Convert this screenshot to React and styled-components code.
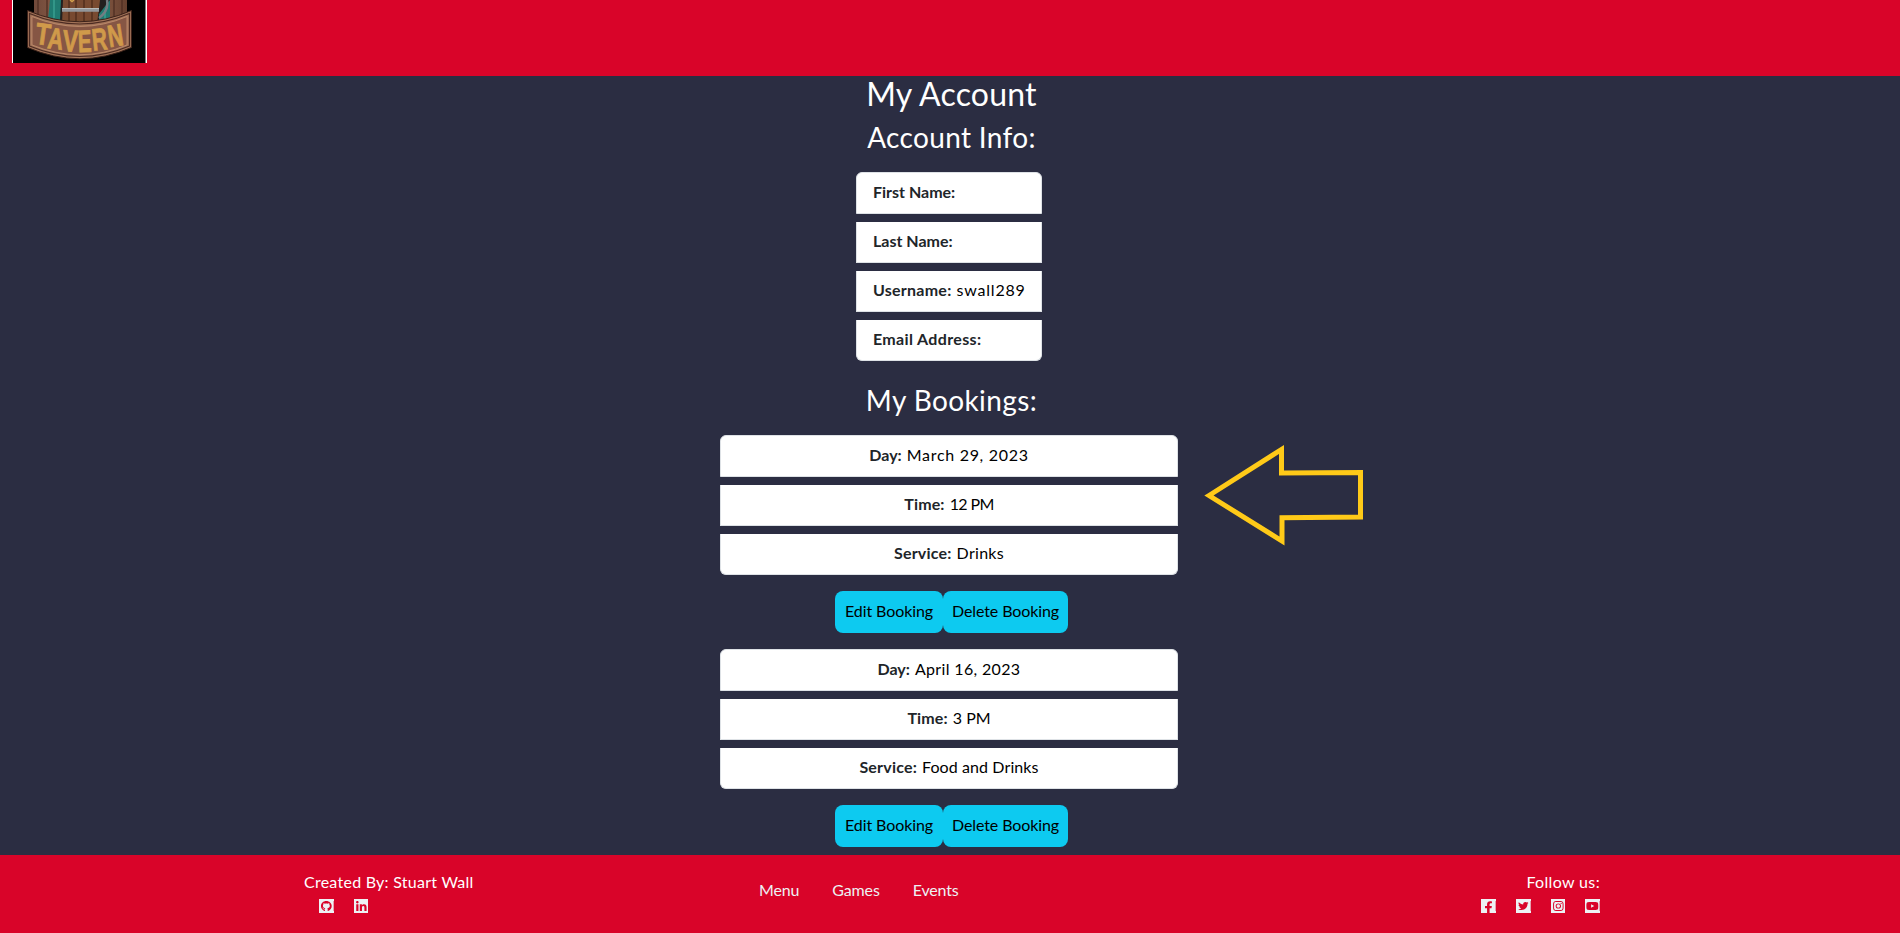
import React from 'react';
import styled, { createGlobalStyle } from 'styled-components';
import {
  FaGithubSquare,
  FaLinkedin,
  FaFacebookSquare,
  FaTwitterSquare,
  FaInstagramSquare,
  FaYoutubeSquare,
} from 'react-icons/fa';

const GlobalStyle = createGlobalStyle`
  * { box-sizing: border-box; }
  body {
    margin: 0;
    background: #2b2d42;
    color: #212529;
    font: 400 16px/1.5 Lato, sans-serif;
    overflow: hidden;
  }
`;

const Page = styled.div`
  height: 933px;
  display: flex;
  flex-direction: column;
`;

const Header = styled.header`
  height: 76px;
  flex: none;
  padding-left: 12px;
  background: #d90429;
`;

const Logo = styled.svg`
  display: block;
`;

const Main = styled.main`
  flex: 1;
  min-height: 0;
  display: flex;
  flex-direction: column;
  align-items: center;
  padding-right: 2px;
  position: relative;
`;

const Title = styled.h1`
  margin: 0 0 8px 5px;
  padding-bottom: 2px;
  height: 38.4px;
  color: #fff;
  font-size: 32px;
  font-weight: 400;
  line-height: 36.4px;
  letter-spacing: ${(p) => p.$track || 0}px;
  white-space: nowrap;
`;

const SubTitle = styled(Title).attrs({ as: 'h2' })`
  margin-bottom: 16px;
  height: 33.6px;
  font-size: 28px;
  line-height: 31.6px;
`;

const List = styled.ul`
  list-style: none;
  margin: 0;
  padding: 0;
  width: ${(p) => p.$width}px;
  display: flex;
  flex-direction: column;
  gap: 8px;
  margin-bottom: ${(p) => p.$after}px;
`;

const Item = styled.li`
  display: flex;
  justify-content: ${(p) => (p.$centered ? 'center' : 'flex-start')};
  gap: 5px;
  height: 41px;
  padding: 7px 16px 8px;
  background: #fff;
  border: 1px solid #dee2e6;
  border-top: 0;
  white-space: nowrap;

  &:first-child {
    height: 42px;
    border-top: 1px solid #dee2e6;
    border-radius: 6px 6px 0 0;
  }
  &:last-child {
    border-radius: 0 0 6px 6px;
  }
`;

const Label = styled.strong`
  font-weight: 700;
  letter-spacing: ${(p) => p.$track || 0}px;
`;

const Value = styled.span`
  color: #000;
  letter-spacing: ${(p) => p.$track || 0}px;
`;

const Actions = styled.div`
  display: flex;
  margin: 0 0 16px 5px;
`;

const Button = styled.button`
  width: ${(p) => p.$width}px;
  height: 42px;
  padding: 0 0 2px;
  border: 0;
  border-radius: 8px;
  background: #0dcaf0;
  color: #000;
  font: inherit;
  letter-spacing: -0.1px;
  white-space: nowrap;
`;

const Arrow = styled.svg`
  position: absolute;
  left: 1190px;
  top: 354px;
`;

const Footer = styled.footer`
  height: 78px;
  flex: none;
  display: grid;
  grid-template-columns: 455px 1fr auto;
  padding: 15px 300px 0 304px;
  background: #d90429;
  color: #fff;
`;

const Credit = styled.div`
  letter-spacing: ${(p) => p.$track}px;
  text-align: ${(p) => p.$align || 'left'};
  line-height: 24px;
`;

const Icons = styled.div`
  display: flex;
  gap: 20px;
  padding-left: ${(p) => p.$indent || 0}px;
  margin-top: 4px;
  color: #edf2f4;

  svg {
    --corner: linear-gradient(currentColor, currentColor);
    width: 14.67px;
    height: 16px;
    background:
      var(--corner) left 0 top 1px / 2px 2px no-repeat,
      var(--corner) right 0 top 1px / 2px 2px no-repeat,
      var(--corner) left 0 bottom 1px / 2px 2px no-repeat,
      var(--corner) right 0 bottom 1px / 2px 2px no-repeat;
  }
`;

const FooterNav = styled.nav`
  display: flex;
  gap: 33px;
  padding-top: 8px;
  color: #edf2f4;
  letter-spacing: -0.15px;
`;

function TavernLogo() {
  return (
    <Logo width="135" height="63" viewBox="0 0 135 63">
      <defs>
        <linearGradient id="wood" x1="0" x2="1">
          <stop offset="0" stopColor="#70493a" />
          <stop offset=".5" stopColor="#9a6950" />
          <stop offset="1" stopColor="#65402f" />
        </linearGradient>
      </defs>
      <rect width="135" height="63" fill="#fff" />
      <rect x="1" width="132.5" height="63" fill="#000" />
      <path d="M22 0h17v20H22zM98 0h17v20H98z" fill="url(#wood)" />
      <path d="M26 0v18M35 0v18M102 0v18M110 0v18" stroke="#4b2b20" strokeWidth="1.2" />
      <path d="M39 0h59v24H39z" fill="#23201f" />
      <path d="M38 0h11l-1 20H36zM87 14l11-14v21H87z" fill="#207b71" />
      <path d="M42 0v18M93 10v10" stroke="#39a090" strokeWidth="1.5" />
      <path d="M51 0h37l-3 24H50z" fill="#784a30" />
      <path d="M57 0v23M64 0v24M72 0v24M80 0v24" stroke="#492918" strokeWidth="1.2" />
      <path d="M50 10h37" stroke="#92979a" strokeWidth="3.6" />
      <path d="M50 8.5h37" stroke="#c3c6c8" strokeWidth=".8" />
      <path d="M58 0l2 1.5 2-1.5" stroke="#d4a24d" strokeWidth="1.5" fill="none" />
      <path d="M95 0q2 11-8 18" stroke="#737d82" strokeWidth="2.5" fill="none" />
      <path d="M15.5 10.5Q68 33 119.5 10.5V47.5Q68 70 15.5 47.5Z" fill="#a27358" stroke="#3b2119" strokeWidth="1" />
      <path d="M17.5 13.5Q68 34.5 117.5 13.5V46Q68 67 17.5 46Z" fill="none" stroke="#4c2b22" strokeWidth="1.2" />
      <path d="M20 16.5Q68 36.5 115 16.5V45Q68 64.5 20 45Z" fill="#865644" stroke="#c39070" strokeWidth=".8" />
      <g
        fill="#d09a4a"
        stroke="#d09a4a"
        strokeWidth=".8"
        fontFamily="Liberation Sans, sans-serif"
        fontWeight="700"
        fontSize="31"
        textAnchor="middle"
      >
        <text transform="translate(29.5 44.5) rotate(8) scale(.78 .98)">T</text>
        <text transform="translate(42.5 49) rotate(7) scale(.7 .96)">A</text>
        <text transform="translate(58 51.5) rotate(3) scale(.74 .98)">V</text>
        <text transform="translate(73 52) rotate(-2) scale(.66 1)">E</text>
        <text transform="translate(88.5 50) rotate(-6) scale(.68 1)">R</text>
        <text transform="translate(105 46) rotate(-9) scale(.68 1)">N</text>
      </g>
    </Logo>
  );
}

function Row({ centered, label, labelTrack, value, track }) {
  return (
    <Item $centered={centered}>
      <Label $track={labelTrack}>{label}</Label>
      {value && <Value $track={track}>{value}</Value>}
    </Item>
  );
}

const bookings = [
  { day: 'March 29, 2023', dayTrack: 0.7, time: '12 PM', timeTrack: -0.6, service: 'Drinks', serviceTrack: 0.3 },
  { day: 'April 16, 2023', dayTrack: 0.35, time: '3 PM', timeTrack: 0, service: 'Food and Drinks', serviceTrack: 0.1 },
];

function Booking({ booking }) {
  return (
    <>
      <List $width={458} $after={16}>
        <Row centered label="Day:" value={booking.day} track={booking.dayTrack} />
        <Row centered label="Time:" labelTrack={0.15} value={booking.time} track={booking.timeTrack} />
        <Row centered label="Service:" labelTrack={0.2} value={booking.service} track={booking.serviceTrack} />
      </List>
      <Actions>
        <Button $width={108}>Edit Booking</Button>
        <Button $width={125}>Delete Booking</Button>
      </Actions>
    </>
  );
}

export default function App() {
  return (
    <>
      <GlobalStyle />
      <Page>
        <Header>
          <TavernLogo />
        </Header>
        <Main>
          <Title $track={0.2}>My Account</Title>
          <SubTitle $track={0.35}>Account Info:</SubTitle>
          <List $width={186} $after={24.4}>
            <Row label="First Name:" />
            <Row label="Last Name:" />
            <Row label="Username:" labelTrack={0.25} value="swall289" track={0.8} />
            <Row label="Email Address:" labelTrack={0.35} />
          </List>
          <SubTitle $track={0.4}>My Bookings:</SubTitle>
          {bookings.map((b) => (
            <Booking key={b.day} booking={b} />
          ))}
          <Arrow width="190" height="130" viewBox="0 0 190 130">
            <path
              d="M19 65.5 91.5 19.5V43L170.5 42.5V87L92 87.7V111Z"
              fill="none"
              stroke="#ffca18"
              strokeWidth="5"
              strokeMiterlimit="8"
            />
          </Arrow>
        </Main>
        <Footer>
          <div>
            <Credit $track={0.26}>Created By: Stuart Wall</Credit>
            <Icons $indent={15}>
              <FaGithubSquare preserveAspectRatio="none" />
              <FaLinkedin preserveAspectRatio="none" />
            </Icons>
          </div>
          <FooterNav>
            <span>Menu</span>
            <span>Games</span>
            <span>Events</span>
          </FooterNav>
          <div>
            <Credit $track={0.35} $align="right">Follow us:</Credit>
            <Icons>
              <FaFacebookSquare preserveAspectRatio="none" />
              <FaTwitterSquare preserveAspectRatio="none" />
              <FaInstagramSquare preserveAspectRatio="none" />
              <FaYoutubeSquare preserveAspectRatio="none" />
            </Icons>
          </div>
        </Footer>
      </Page>
    </>
  );
}
